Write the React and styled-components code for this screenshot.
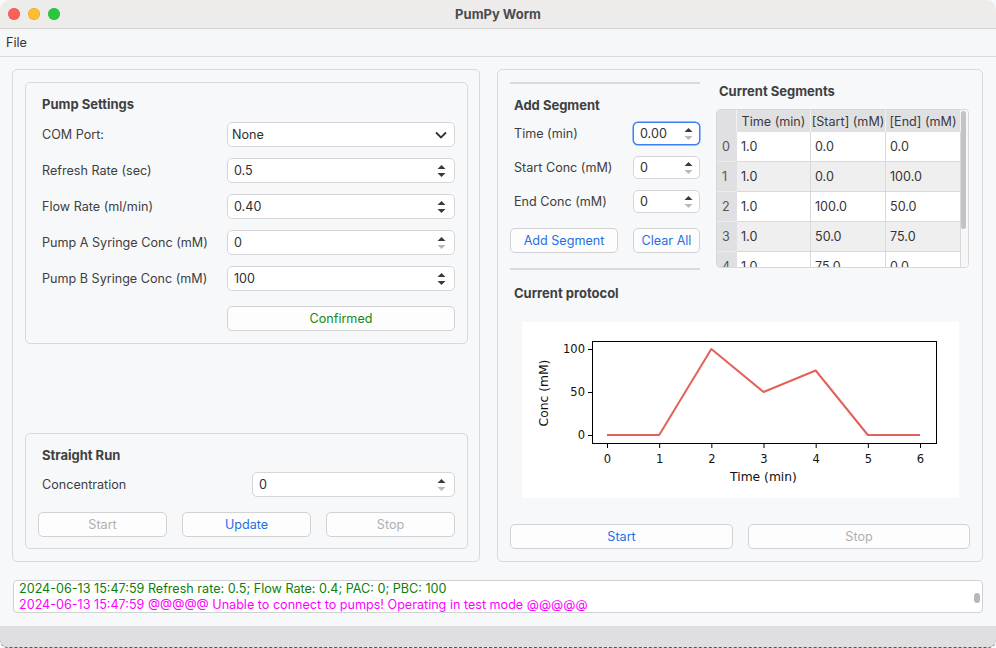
import React from "react";
import styled, { createGlobalStyle } from "styled-components";

const GlobalStyle = createGlobalStyle`
  html, body { margin: 0; padding: 0; background: #ffffff; }
  body {
    font-family: Inter, "Noto Sans", "Liberation Sans", sans-serif;
    font-size: 12.6px;
    color: #3c3c3e;
  }
  * { box-sizing: border-box; }
`;

const Window = styled.div`
  width: 996px;
  height: 648px;
  display: flex;
  flex-direction: column;
  background: #f7f8fa;
  overflow: hidden;
`;

const TitleBar = styled.div`
  height: 29px;
  flex-shrink: 0;
  display: grid;
  grid-template-columns: 1fr auto 1fr;
  align-items: center;
  background: #edeceb;
  border-bottom: 1px solid #d3d3d3;
  border-radius: 10px 10px 0 0;
`;

const Lights = styled.div`
  display: flex;
  gap: 8px;
  padding-left: 8px;
`;

const Light = styled.span`
  width: 12px;
  height: 12px;
  border-radius: 50%;
  background: ${(p) => p.color};
  box-shadow: inset 0 0 0 0.5px rgba(0, 0, 0, 0.15);
`;

const WindowTitle = styled.div`
  font-weight: 700;
  font-size: 13px;
  color: #4b4b4b;
`;

const MenuBar = styled.div`
  height: 28px;
  flex-shrink: 0;
  display: flex;
  align-items: center;
  padding: 0 0 1px 6px;
  background: #f6f7f9;
  border-bottom: 1px solid #dcdcde;
  color: #333;
`;

const Main = styled.div`
  display: flex;
  gap: 17px;
  padding: 12px 13px 0 12px;
`;

const Panel = styled.section`
  height: 493px;
  width: ${(p) => p.width}px;
  border: 1px solid #dadadd;
  border-radius: 5px;
  padding: 12px 11px 12px 12px;
  display: flex;
  flex-direction: column;
  justify-content: space-between;
`;

const RightPanel = styled(Panel)`
  padding: 12px;
  justify-content: flex-start;
`;

const GroupBox = styled.div`
  border: 1px solid #d9d9dc;
  border-radius: 5px;
  padding: 13px 12px ${(p) => p.bottom}px 16px;
`;

const Title = styled.div`
  font-weight: 700;
  font-size: 13px;
  line-height: 16px;
  color: #404042;
  padding-left: ${(p) => p.indent || 0}px;
`;

const FormGrid = styled.div`
  display: grid;
  grid-template-columns: ${(p) => p.cols};
  row-gap: 11px;
  align-items: center;
  margin-top: ${(p) => p.top}px;
`;

const Label = styled.div`
  color: #3e3e40;
  white-space: nowrap;
  padding-left: ${(p) => p.indent || 0}px;
`;

const Field = styled.div`
  height: ${(p) => p.h}px;
  display: flex;
  align-items: center;
  justify-content: space-between;
  background: #ffffff;
  border: 1px solid ${(p) => (p.focused ? "#3b7ff2" : "#d6d6d9")};
  box-shadow: ${(p) => (p.focused ? "0 0 0 0.5px #3b7ff2" : "none")};
  border-radius: 5px;
  padding: 0 ${(p) => p.pr}px 0 ${(p) => p.pl}px;
  color: #2e2e30;
`;

const Button = styled.div`
  height: 25px;
  display: flex;
  align-items: center;
  justify-content: center;
  background: #fdfdfd;
  border: 1px solid #d2d2d5;
  border-radius: 5px;
  color: ${(p) =>
    p.tone === "blue" ? "#1f6fe6" : p.tone === "green" ? "#138a13" : "#b0b0b2"};
`;

const ConfirmRow = styled.div`
  margin-top: 15px;
  margin-left: 185px;
`;

const RunButtons = styled.div`
  display: grid;
  grid-template-columns: repeat(3, 1fr);
  gap: 15px;
  margin: 15px 0 0 -4px;
`;

const TopRow = styled.div`
  display: flex;
  gap: 16px;
`;

const SegmentForm = styled.div`
  width: 190px;
  display: flex;
  flex-direction: column;
`;

const Rule = styled.div`
  height: 2px;
  background: #dadadc;
  margin-top: ${(p) => p.top}px;
`;

const SegButtons = styled.div`
  display: grid;
  grid-template-columns: 108px 67px;
  justify-content: space-between;
  margin-top: 15px;
`;

const SegmentsCol = styled.div`
  width: 253px;
  padding-top: 1px;
`;

const TableWrap = styled.div`
  margin-top: 10px;
  height: 159px;
  display: flex;
  border: 1px solid #d8d8da;
  border-radius: 4px;
  overflow: hidden;
  background: #fff;
`;

const TableGrid = styled.div`
  display: grid;
  grid-template-columns: 20px 74px 75px 75px;
  grid-auto-rows: 30px;
  grid-template-rows: 22px;
  align-content: start;
`;

const HeadCell = styled.div`
  background: #e0e0e3;
  border-right: 1px solid #f1f1f3;
  display: flex;
  align-items: center;
  justify-content: center;
  white-space: nowrap;
  overflow: hidden;
  color: #3a3a3c;
`;

const IndexCell = styled.div`
  background: #e0e0e3;
  border-bottom: 1px solid #ececee;
  display: flex;
  align-items: center;
  padding-left: 5px;
  color: #555;
`;

const Cell = styled.div`
  background: ${(p) => (p.alt ? "#efeff0" : "#ffffff")};
  border-right: 1px solid #d9d9db;
  border-bottom: 1px solid #d9d9db;
  display: flex;
  align-items: center;
  padding-left: 4px;
  color: #333;
`;

const ScrollTrack = styled.div`
  width: 7px;
  background: #f7f7f7;
  padding: 1px 1px 0 0;
`;

const ScrollThumb = styled.div`
  width: 5px;
  height: 118px;
  border-radius: 3px;
  background: #c3c3c5;
`;

const ProtocolTitle = styled(Title)`
  margin-top: 15px;
`;

const ChartBox = styled.div`
  width: 437px;
  height: 176px;
  margin: 21px 0 0 12px;
  background: #ffffff;
`;

const BottomButtons = styled.div`
  display: grid;
  grid-template-columns: 223px 222px;
  justify-content: space-between;
  margin-top: auto;
`;

const LogBox = styled.div`
  position: relative;
  margin: 18px 13px 0 13px;
  height: 33px;
  background: #ffffff;
  border: 1px solid #d2d2d5;
  border-radius: 4px;
  padding: 0 0 0 5px;
  overflow: hidden;
`;

const LogLine = styled.div`
  line-height: 16px;
  white-space: nowrap;
  color: ${(p) => p.color};
`;

const LogScroll = styled.div`
  position: absolute;
  right: 2px;
  top: 12px;
  width: 6px;
  height: 10px;
  border-radius: 3px;
  background: #b8b8ba;
`;

const BottomStrip = styled.div`
  margin-top: auto;
  height: 22px;
  background: #dfdfe2;
  border-radius: 0 0 8px 8px;
  border-bottom: 1px dashed #555;
`;

const SpinArrows = ({ upOff, downOff }) => (
  <svg width="9" height="14" viewBox="0 0 9 14">
    <polygon points="0.5,5 4.5,1 8.5,5" fill={upOff ? "#b8b8ba" : "#3a3a3c"} />
    <polygon points="0.5,9 8.5,9 4.5,13" fill={downOff ? "#b8b8ba" : "#3a3a3c"} />
  </svg>
);

const Chevron = () => (
  <svg width="12" height="8" viewBox="0 0 12 8">
    <polyline points="1,1.5 6,6.5 11,1.5" fill="none" stroke="#333" strokeWidth="1.8" />
  </svg>
);

const SpinBox = ({ value, h = 25, pr = 8, focused, downOff, upOff }) => (
  <Field h={h} pl={6} pr={pr} focused={focused}>
    <span>{value}</span>
    <SpinArrows downOff={downOff} upOff={upOff} />
  </Field>
);

const pumpRows = [
  { label: "Refresh Rate (sec)", value: "0.5" },
  { label: "Flow Rate (ml/min)", value: "0.40" },
  { label: "Pump A Syringe Conc (mM)", value: "0", downOff: true },
  { label: "Pump B Syringe Conc (mM)", value: "100" },
];

const segments = [
  ["1.0", "0.0", "0.0"],
  ["1.0", "0.0", "100.0"],
  ["1.0", "100.0", "50.0"],
  ["1.0", "50.0", "75.0"],
  ["1.0", "75.0", "0.0"],
];

const protocol = [0, 0, 100, 50, 75, 0, 0];

const ProtocolChart = () => {
  const px = (t) => 85 + t * 52.17;
  const py = (v) => 113 - v * 0.86;
  const pts = protocol.map((v, t) => `${px(t)},${py(v)}`).join(" ");
  const font = { fontFamily: '"DejaVu Sans", sans-serif', fill: "#111" };
  return (
    <svg width="437" height="176" viewBox="0 0 437 176">
      <polyline points={pts} fill="none" stroke="#e0625a" strokeWidth="2" strokeLinejoin="round" />
      <rect x="70.5" y="19.5" width="344" height="102" fill="none" stroke="#000" strokeWidth="1" />
      {[0, 50, 100].map((v) => (
        <g key={v}>
          <line x1="66" x2="70" y1={py(v) + 0.5} y2={py(v) + 0.5} stroke="#000" />
          <text x="63" y={py(v) + 4} textAnchor="end" fontSize="11.5" style={font}>
            {v}
          </text>
        </g>
      ))}
      {protocol.map((_, t) => (
        <g key={t}>
          <line x1={px(t) + 0.5} x2={px(t) + 0.5} y1="122" y2="126" stroke="#000" />
          <text x={px(t) + 0.5} y="141" textAnchor="middle" fontSize="11.5" style={font}>
            {t}
          </text>
        </g>
      ))}
      <text x="241.5" y="159" textAnchor="middle" fontSize="12.3" style={font}>
        Time (min)
      </text>
      <text
        x="0"
        y="0"
        transform="translate(26 71) rotate(-90)"
        textAnchor="middle"
        fontSize="12.3"
        style={font}
      >
        Conc (mM)
      </text>
    </svg>
  );
};

export default function App() {
  return (
    <>
      <GlobalStyle />
      <Window>
        <TitleBar>
          <Lights>
            <Light color="#fe5f57" />
            <Light color="#febc2e" />
            <Light color="#28c840" />
          </Lights>
          <WindowTitle>PumPy Worm</WindowTitle>
          <div />
        </TitleBar>
        <MenuBar>File</MenuBar>

        <Main>
          <Panel width={468}>
            <GroupBox bottom={12}>
              <Title>Pump Settings</Title>
              <FormGrid cols="185px 1fr" top={10}>
                <Label>COM Port:</Label>
                <Field h={25} pl={4} pr={7}>
                  <span>None</span>
                  <Chevron />
                </Field>
                {pumpRows.map((r) => (
                  <React.Fragment key={r.label}>
                    <Label>{r.label}</Label>
                    <SpinBox value={r.value} downOff={r.downOff} />
                  </React.Fragment>
                ))}
              </FormGrid>
              <ConfirmRow>
                <Button tone="green">Confirmed</Button>
              </ConfirmRow>
            </GroupBox>

            <GroupBox bottom={11}>
              <Title>Straight Run</Title>
              <FormGrid cols="210px 1fr" top={9}>
                <Label>Concentration</Label>
                <SpinBox value="0" downOff />
              </FormGrid>
              <RunButtons>
                <Button>Start</Button>
                <Button tone="blue">Update</Button>
                <Button>Stop</Button>
              </RunButtons>
            </GroupBox>
          </Panel>

          <RightPanel width={486}>
            <TopRow>
              <SegmentForm>
                <Rule top={0} />
                <Title indent={4} style={{ marginTop: 13 }}>
                  Add Segment
                </Title>
                <FormGrid cols="123px 67px" top={9}>
                  <Label indent={4}>Time (min)</Label>
                  <SpinBox value="0.00" h={23} pr={6} focused downOff />
                  <Label indent={4}>Start Conc (mM)</Label>
                  <SpinBox value="0" h={23} pr={6} downOff />
                  <Label indent={4}>End Conc (mM)</Label>
                  <SpinBox value="0" h={23} pr={6} downOff />
                </FormGrid>
                <SegButtons>
                  <Button tone="blue">Add Segment</Button>
                  <Button tone="blue">Clear All</Button>
                </SegButtons>
                <Rule top={15} />
              </SegmentForm>

              <SegmentsCol>
                <Title indent={3}>Current Segments</Title>
                <TableWrap>
                  <TableGrid>
                    <HeadCell />
                    <HeadCell>Time (min)</HeadCell>
                    <HeadCell>[Start] (mM)</HeadCell>
                    <HeadCell>[End] (mM)</HeadCell>
                    {segments.map((row, i) => (
                      <React.Fragment key={i}>
                        <IndexCell>{i}</IndexCell>
                        {row.map((c, j) => (
                          <Cell key={j} alt={i % 2 === 1}>
                            {c}
                          </Cell>
                        ))}
                      </React.Fragment>
                    ))}
                  </TableGrid>
                  <ScrollTrack>
                    <ScrollThumb />
                  </ScrollTrack>
                </TableWrap>
              </SegmentsCol>
            </TopRow>

            <ProtocolTitle indent={4}>Current protocol</ProtocolTitle>
            <ChartBox>
              <ProtocolChart />
            </ChartBox>

            <BottomButtons>
              <Button tone="blue">Start</Button>
              <Button>Stop</Button>
            </BottomButtons>
          </RightPanel>
        </Main>

        <LogBox>
          <LogLine color="#0b800b">
            2024-06-13 15:47:59 Refresh rate: 0.5; Flow Rate: 0.4; PAC: 0; PBC: 100
          </LogLine>
          <LogLine color="#ff00ff">
            2024-06-13 15:47:59 @@@@@ Unable to connect to pumps! Operating in test mode @@@@@
          </LogLine>
          <LogScroll />
        </LogBox>

        <BottomStrip />
      </Window>
    </>
  );
}
